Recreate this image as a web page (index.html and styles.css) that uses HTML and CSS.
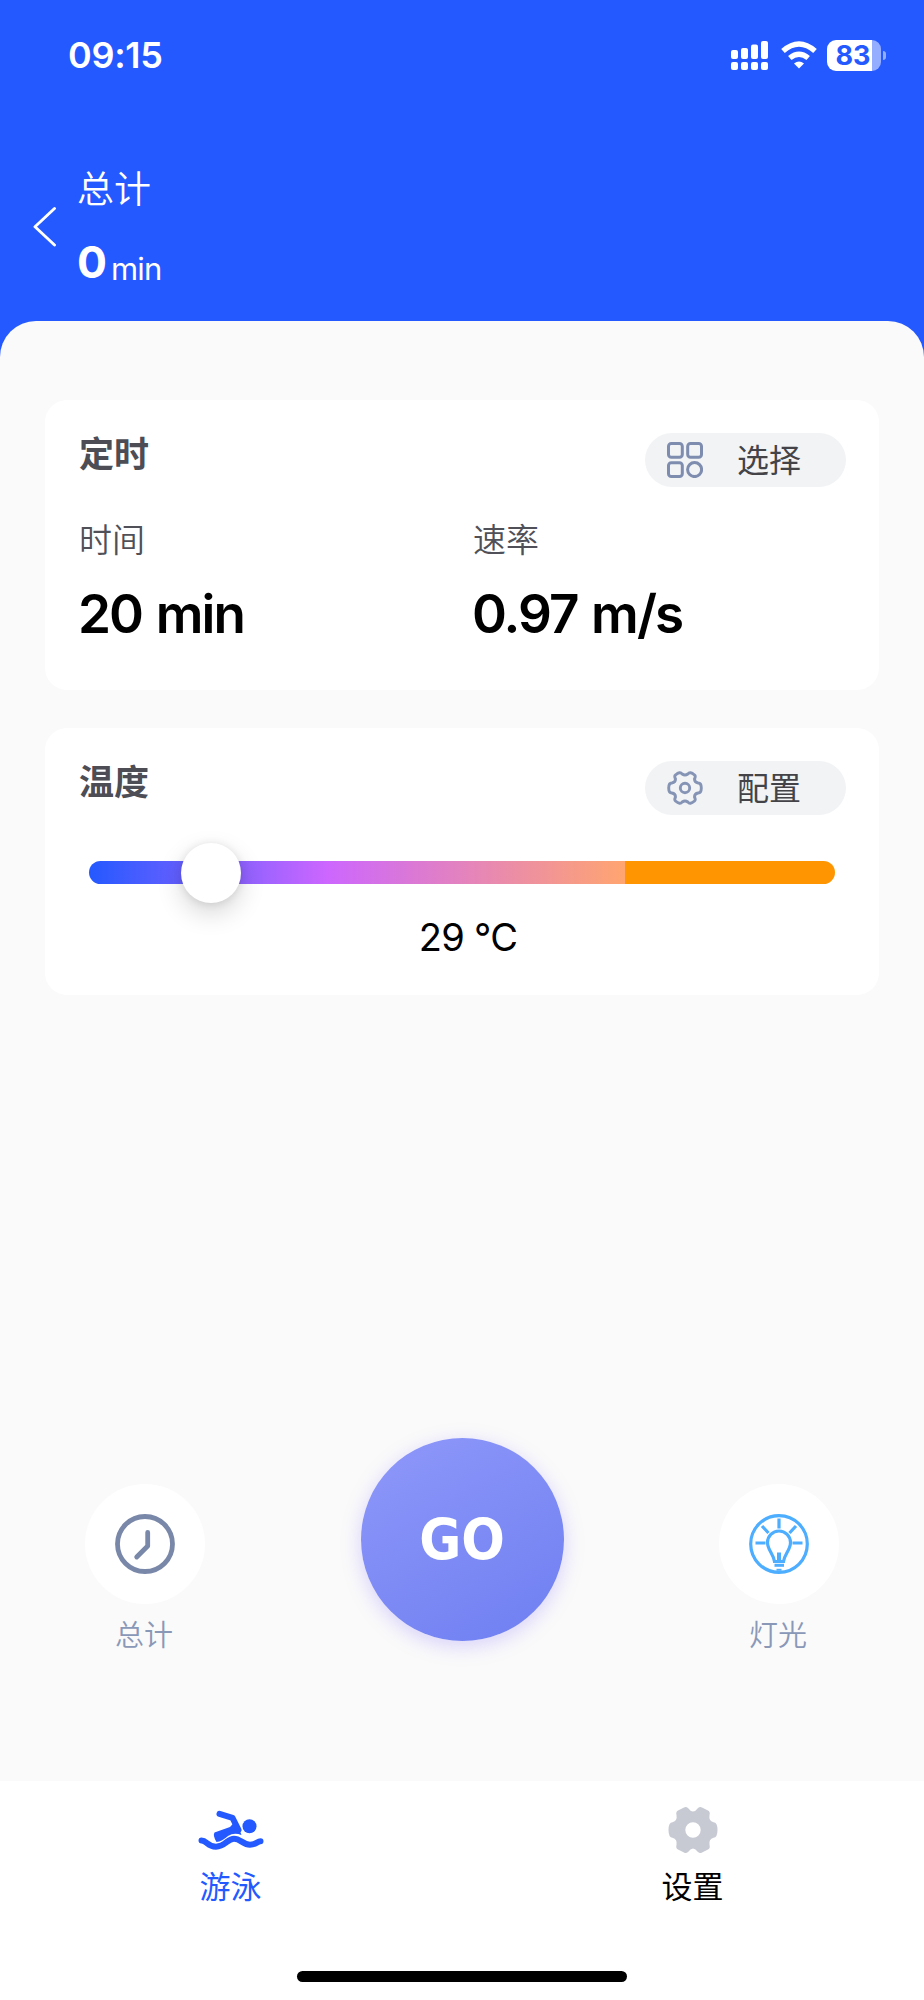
FILE: index.html
```html
<!DOCTYPE html>
<html lang="zh-CN">
<head>
<meta charset="utf-8">
<title>游泳</title>
<link rel="stylesheet" href="styles.css">
</head>
<body>
<div class="app">
  <header class="header">
    <div class="status">
      <span class="clock">09:15</span>
      <div class="status-icons">
        <svg class="signal" width="38" height="30" viewBox="0 0 38 30" fill="#fff">
          <rect x="0" y="10" width="7" height="9" rx="2"/><rect x="10" y="8" width="7" height="11" rx="2"/><rect x="20" y="4.500" width="7" height="14.500" rx="2"/><rect x="30" y="1" width="7" height="18" rx="2"/>
          <rect x="0" y="22" width="7" height="8" rx="2"/><rect x="10" y="22" width="7" height="8" rx="2"/><rect x="20" y="22" width="7" height="8" rx="2"/><rect x="30" y="22" width="7" height="8" rx="2"/>
        </svg>
        <svg class="wifi" width="36" height="28" viewBox="0 0 36 28">
          <g fill="none" stroke="#fff" stroke-width="5.400"><path d="M2 10Q18-4 34 10"/><path d="M8.800 17Q18 9.500 27.200 17"/></g>
          <path d="M13 22.500Q18 18.500 23 22.500L18 27.500Z" fill="#fff"/>
        </svg>
        <div class="battery"><span class="battery-level">83</span><i class="battery-tip"></i></div>
      </div>
    </div>
    <div class="summary">
      <svg class="back" width="24" height="42" viewBox="0 0 24 42"><path d="M21.500 2.500 2 20.800l19.500 18.200" fill="none" stroke="#fff" stroke-width="2.900" stroke-linecap="round" stroke-linejoin="round"/></svg>
      <div>
        <div class="summary-label">总计</div>
        <div class="summary-value"><b>0</b><span>min</span></div>
      </div>
    </div>
  </header>

  <main class="sheet">
    <section class="card timer">
      <div class="card-head">
        <h2>定时</h2>
        <button class="pill">
          <svg width="36" height="36" viewBox="0 0 36 36" fill="none" stroke="#7e8caf" stroke-width="3"><rect x="1.500" y="1.500" width="13.800" height="13.800" rx="2.800"/><rect x="20.700" y="1.500" width="13.800" height="13.800" rx="2.800"/><rect x="1.500" y="20.700" width="13.800" height="13.800" rx="2.800"/><circle cx="27.600" cy="27.600" r="7"/></svg>
          <span>选择</span>
        </button>
      </div>
      <div class="metrics">
        <div><div class="metric-label">时间</div><div class="metric-value">20 min</div></div>
        <div><div class="metric-label">速率</div><div class="metric-value">0.97 m/s</div></div>
      </div>
    </section>

    <section class="card temperature">
      <div class="card-head">
        <h2>温度</h2>
        <button class="pill">
          <svg width="36" height="36" viewBox="-18 -18 36 36" fill="none" stroke="#8593b5" stroke-width="2.900" stroke-linejoin="round"><path d="M-9.500-13Q-5-17-2.800-14Q0-11.800 2.800-14Q5-17 9.500-13Q11-12 9.500-9Q9.500-5.500 13.200-5Q16.300-5 16.300 0Q16.300 5 13.200 5Q9.500 5.500 9.500 9Q11 12 9.500 13Q5 17 2.800 14Q0 11.800-2.800 14Q-5 17-9.500 13Q-11 12-9.500 9Q-9.500 5.500-13.200 5Q-16.300 5-16.300 0Q-16.300-5-13.200-5Q-9.500-5.500-9.500-9Q-11-12-9.500-13Z"/><circle r="4.700"/></svg>
          <span>配置</span>
        </button>
      </div>
      <div class="slider"><i class="thumb"></i></div>
      <div class="degrees">29 °C</div>
    </section>

    <div class="actions">
      <div class="action">
        <div class="round"><svg width="60" height="60" viewBox="0 0 60 60" fill="none" stroke="#7987a8" stroke-linecap="round" stroke-linejoin="round"><circle cx="30" cy="30" r="27.500" stroke-width="4.800"/><path d="M32.700 18.500v13.500L21.700 43" stroke-width="4.800"/></svg></div>
        <span>总计</span>
      </div>
      <button class="go">GO</button>
      <div class="action">
        <div class="round"><svg width="60" height="60" viewBox="0 0 60 60" fill="none" stroke="#4dadff"><circle cx="30" cy="30" r="28.300" stroke-width="3.200"/><g stroke-width="3.200"><path d="M30 4.500v10M13 12l6.500 7M47 12l-6.500 7M6.500 29h10M43.500 29h10"/><path d="M25.500 47.500C24.500 40 18.500 36 18.500 28.500a11.500 11.500 0 0 1 23 0C41.500 36 35.500 40 34.500 47.500Z"/></g><path d="M30 38.500v9" stroke-width="4"/><path d="M25.500 51.300h9.500" stroke-width="3"/><path d="M27.500 55.800h5" stroke-width="2"/></svg></div>
        <span>灯光</span>
      </div>
    </div>
  </main>

  <nav class="tabs">
    <div class="tab active">
      <svg width="68" height="50" viewBox="0 0 68 50"><circle cx="52.500" cy="21.300" r="7" fill="#2459ff"/><path d="M22.500 8.800 35.500 12.800l6 12" fill="none" stroke="#2459ff" stroke-width="6" stroke-linecap="round" stroke-linejoin="round"/><path d="M17.500 27.500 33 22 39 15.500l5.500 14.500Q37 27 31 31 25 36.500 19.500 37Q15.500 30.500 17.500 27.500Z" fill="#2459ff"/><path d="M19.500 39Q27 38 31.500 33.500 37 29 43 31.500" fill="none" stroke="#fff" stroke-width="2"/><path d="M4.500 35.500C10 35.500 10 41.700 19 41.700S30.500 33.700 37 33.700 46 39.700 53 39.700 60 36.200 63.500 36.200" fill="none" stroke="#2459ff" stroke-width="6" stroke-linecap="round"/></svg>
      <span>游泳</span>
    </div>
    <div class="tab">
      <svg width="50" height="50" viewBox="-25 -25 50 50"><path fill="#c7cad3" fill-rule="evenodd" d="M-9-22.500Q-7-23.800-5-22Q-2.500-18.500 0-18.500Q2.500-18.500 5-22Q7-23.800 9-22.500L15-19.500Q17.500-18 16.500-15Q15.500-9 20.500-7.800Q24.500-7.500 24.500 0Q24.500 7.500 20.500 7.800Q15.500 9 16.500 15Q17.500 18 15 19.500L9 22.500Q7 23.800 5 22Q2.500 18.500 0 18.500Q-2.500 18.500-5 22Q-7 23.800-9 22.500L-15 19.500Q-17.500 18-16.500 15Q-15.500 9-20.500 7.800Q-24.500 7.500-24.500 0Q-24.500-7.500-20.500-7.800Q-15.500-9-16.500-15Q-17.500-18-15-19.500ZM7.700 0A7.700 7.700 0 1 0-7.700 0A7.700 7.700 0 1 0 7.700 0Z"/></svg>
      <span>设置</span>
    </div>
    <i class="home-bar"></i>
  </nav>
</div>
</body>
</html>
```

FILE: styles.css
```css
* { box-sizing: border-box; }
body { margin: 0; font-family: Inter, "Noto Sans CJK SC", sans-serif; }
svg { display: block; flex: none; }
button { border: 0; padding: 0; font: inherit; }
.app { width: 924px; height: 2000px; display: flex; flex-direction: column; background: #2459ff; overflow: hidden; }

.header { height: 321px; flex: none; color: #fff; }
.status { height: 110px; display: flex; justify-content: space-between; padding: 0 43px 0 68px; }
.clock { margin-top: 35px; height: 40px; line-height: 40px; font-size: 36px; font-weight: 600; letter-spacing: -0.3px; }
.status-icons { display: flex; align-items: flex-start; padding-top: 40px; }
.wifi { margin: 1px 10px 0 12px; }
.battery { position: relative; width: 54px; height: 31px; border-radius: 9px; background: linear-gradient(90deg, #fff 0 45px, #94adff 45px); }
.battery-level { display: block; width: 52px; line-height: 31px; text-align: center; color: #2459ff; font-size: 27px; font-weight: 700; }
.battery-tip { position: absolute; left: 56px; top: 11px; width: 3px; height: 9px; border-radius: 0 4px 4px 0; background: #94adff; }
.summary { display: flex; padding-left: 33px; }
.back { margin: 96px 20px 0 0; }
.summary-label { margin-top: 53px; height: 48px; line-height: 48px; font-family: "Noto Sans CJK SC", sans-serif; font-size: 37px; font-weight: 350; }
.summary-value { display: flex; margin-top: 26px; }
.summary-value b { font-size: 44.5px; line-height: 50px; font-weight: 700; letter-spacing: -2px; }
.summary-value span { margin: 8px 0 0 6px; line-height: 48px; font-size: 31px; font-weight: 400; letter-spacing: -0.8px; }

.sheet { flex: 1; background: #fafafa; border-radius: 36px 36px 0 0; padding: 79px 45px 0; display: flex; flex-direction: column; }
.card { background: #fff; border-radius: 22px; padding: 0 33px 0 34px; }
.timer { height: 290px; }
.temperature { height: 267px; margin-top: 38px; }
.card-head { display: flex; justify-content: space-between; height: 88px; padding-top: 33px; }
.card-head h2 { margin: -5px 0 0; height: 48px; line-height: 48px; font-family: "Noto Sans CJK SC", sans-serif; font-size: 35px; font-weight: 600; color: #4d4d55; }
.pill { width: 201px; height: 54px; border-radius: 27px; background: #f1f3f5; display: flex; align-items: center; padding-left: 22px; gap: 34px; color: #444448; font-family: "Noto Sans CJK SC", sans-serif; font-size: 32px; line-height: 50px; }
.pill span { margin-top: -4px; }
.metrics { display: grid; grid-template-columns: 394px 1fr; padding-top: 26px; }
.metric-label { height: 48px; line-height: 48px; font-family: "Noto Sans CJK SC", sans-serif; font-size: 33px; font-weight: 350; color: #505058; }
.metric-value { margin: 22px 0 0 -1px; height: 60px; line-height: 60px; font-size: 53px; font-weight: 600; color: #000; letter-spacing: -1.9px; word-spacing: 2px; white-space: nowrap; }
.slider { position: relative; margin: 45px 11px 0 10px; height: 23px; border-radius: 12px; background: linear-gradient(90deg, #2459ff 0, #635fff 90px, #cc66ff 237px, #ffa570 536px, #ff9500 536px); }
.thumb { position: absolute; left: 92px; top: -18px; width: 60px; height: 60px; border-radius: 50%; background: #fff; box-shadow: 0 10px 26px rgba(0,0,0,.16), 0 1px 8px rgba(0,0,0,.10); }
.degrees { margin: 28px 0 0 11px; text-align: center; font-size: 38px; line-height: 50px; color: #000; letter-spacing: -0.7px; }

.actions { display: flex; justify-content: space-between; padding: 443px 40px 0; }
.action { width: 120px; padding-top: 46px; display: flex; flex-direction: column; align-items: center; }
.action span { margin: 8px 2px 0 0; line-height: 42px; font-family: "Noto Sans CJK SC", sans-serif; font-size: 29px; font-weight: 350; color: #8a98b8; }
.round { width: 120px; height: 120px; border-radius: 50%; background: #fff; display: grid; place-items: center; }
.go { width: 203px; height: 203px; border-radius: 50%; color: #fff; background: linear-gradient(150deg, #8f98fa, #6e7ff1); box-shadow: 0 5px 20px rgba(126,105,255,.28); font-family: "DejaVu Sans Condensed", "DejaVu Sans", sans-serif; font-stretch: condensed; font-weight: 700; font-size: 57px; line-height: 204px; text-align: center; }

.tabs { position: relative; height: 219px; flex: none; background: #fff; display: grid; grid-template-columns: 1fr 1fr; }
.tab { display: flex; flex-direction: column; align-items: center; padding-top: 24px; font-family: "Noto Sans CJK SC", sans-serif; font-size: 31px; color: #000; }
.tab span { margin: 7px 1px 0 0; line-height: 46px; }
.tab.active { color: #2459ff; }
.home-bar { position: absolute; left: 297px; bottom: 18px; width: 330px; height: 11px; border-radius: 6px; background: #000; }
```
